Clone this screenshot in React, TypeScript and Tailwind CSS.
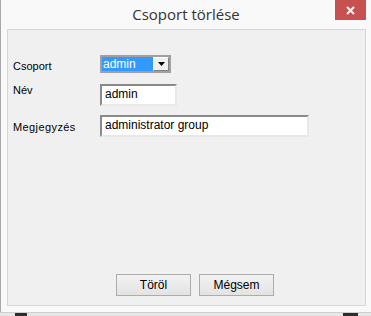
import React from "react";

export default function App() {
  const ui = { fontFamily: '"Liberation Sans", Arial, sans-serif' };
  return (
    <div className="w-[371px] h-[316px] flex flex-col bg-[#e6e6e6] overflow-hidden" style={ui}>
      <div className="h-[312px] flex flex-col bg-[#f9f9f9] border-l border-[#a9a9a9]">
        <div className="relative h-[29px] flex justify-center shrink-0">
          <span
            className="mt-[4px] text-[15px] leading-[20px] text-[#333333]"
            style={{ fontFamily: '"Open Sans", "Noto Sans", sans-serif' }}
          >
            Csoport törlése
          </span>
          <div className="absolute left-[334px] top-0 w-[31px] h-[20px] bg-[#c75050] flex items-center justify-center">
            <svg width="9" height="9" viewBox="0 0 9 9">
              <path d="M1 1 L8 8 M8 1 L1 8" stroke="#ffffff" strokeWidth="2" />
            </svg>
          </div>
        </div>
        <div className="ml-[6px] w-[359px] h-[277px] border border-[#d6d6d6] bg-[#f0f0f0] flex flex-col text-[11px] text-black">
          <div className="flex flex-col pl-[5px] pt-[25px]">
            <div className="flex h-[18px]">
              <div className="w-[87px] pt-[5px] leading-[13px]">Csoport</div>
              <div className="w-[71px] h-[18px] border-2 border-[#a0a0a0] bg-white flex">
                <div className="flex-1 bg-[#3399ff] text-white leading-[14px] pl-[1px] text-[12px]">admin</div>
                <div className="w-[16px] bg-[#f0f0f0] border-l border-t border-white border-r border-b border-r-[#808080] border-b-[#808080] flex items-center justify-center">
                  <svg width="7" height="4" viewBox="0 0 7 4">
                    <path d="M0 0 H7 L3.5 4 Z" fill="#000000" />
                  </svg>
                </div>
              </div>
            </div>
            <div className="flex h-[22px] mt-[11px]">
              <div className="w-[87px] pt-0 leading-[13px]">Név</div>
              <div className="w-[77px] h-[22px] bg-white border-2 border-t-[#8a8a8a] border-l-[#8a8a8a] border-r-[#e8e8e8] border-b-[#e8e8e8] pl-[3px] leading-[17px] text-[12px]">
                admin
              </div>
            </div>
            <div className="flex h-[22px] mt-[9px]">
              <div className="w-[87px] pt-[6px] leading-[13px] tracking-[0.4px]">Megjegyzés</div>
              <div className="w-[209px] h-[22px] bg-white border-2 border-t-[#8a8a8a] border-l-[#8a8a8a] border-r-[#e8e8e8] border-b-[#e8e8e8] pl-[3px] leading-[17px] text-[12px]">
                administrator group
              </div>
            </div>
          </div>
          <div className="flex-1" />
          <div className="flex gap-[8px] ml-[108px] mb-[9px]">
            <div className="w-[75px] h-[22px] border border-[#acacac] bg-gradient-to-b from-[#f2f2f2] to-[#e3e3e3] flex items-center justify-center text-[12px]">
              Töröl
            </div>
            <div className="w-[75px] h-[22px] border border-[#acacac] bg-gradient-to-b from-[#f2f2f2] to-[#e3e3e3] flex items-center justify-center text-[12px]">
              Mégsem
            </div>
          </div>
        </div>
      </div>
      <div className="h-px bg-[#cfcfcf]" />
      <div className="flex-1 flex">
        <div className="ml-[15px] w-[12px] bg-[#2d2d2d]" />
        <div className="ml-[316px] w-[15px] bg-[#2d2d2d]" />
      </div>
    </div>
  );
}
